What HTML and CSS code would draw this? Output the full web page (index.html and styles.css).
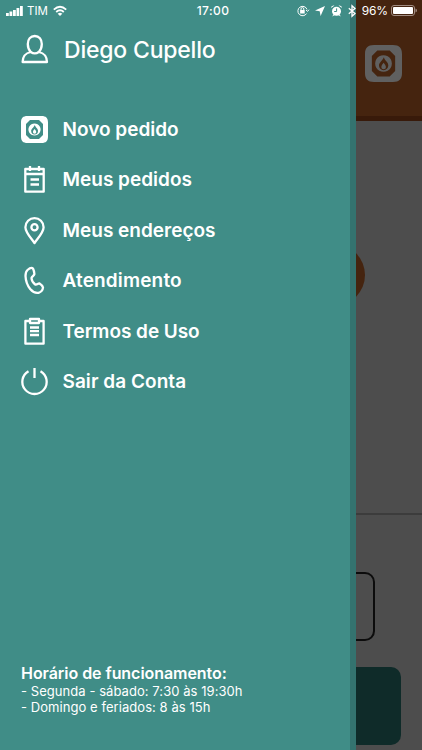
FILE: index.html
```html
<!DOCTYPE html>
<html lang="pt-BR">
<head>
  <meta charset="utf-8">
  <title>Menu</title>
  <link rel="stylesheet" href="styles.css">
</head>
<body>
<div class="screen">

  <!-- page behind the menu -->
  <div class="page">
    <header class="page-header">
      <svg class="page-logo" viewBox="0 0 27 27">
        <path fill-rule="evenodd" d="M6.5 0H20.5C25 0 27 2 27 6.5V20.5C27 25 25 27 20.5 27H6.5C2 27 0 25 0 20.5V6.5C0 2 2 0 6.5 0ZM9 4Q7 6 5 8V19Q7 21 9 23H18Q20 21 22 19V8Q20 6 18 4Z"/>
        <path fill-rule="evenodd" d="M13.5 7.4a6.1 6.1 0 1 0 .01 0ZM13.8 9C14.3 11.5 17 12.3 17 15a3.4 3.4 0 0 1-6.8 0C10.2 13 11.8 12.6 13.8 9Z"/>
        <path d="M13.6 13Q15.3 15 15.3 16a1.7 1.7 0 0 1-3.4 0Q12 14.7 13.6 13Z"/>
      </svg>
    </header>
    <div class="page-map"><div class="page-circle"></div></div>
    <div class="page-form">
      <div class="page-box"></div>
      <div class="page-button"></div>
    </div>
  </div>

  <!-- side menu -->
  <div class="menu">
    <div class="user">
      <svg class="icon" viewBox="0 0 28 30">
        <path d="M14.8 2C10.5 2 7.8 5.4 7.8 10C7.8 13.4 8.8 16 10.8 18C5.4 19.2 2.8 21.6 2.6 28H27C26.8 21.6 24.2 19.2 18.8 18C20.8 16 21.8 13.4 21.8 10C21.8 5.4 19.1 2 14.8 2Z"/>
        <path d="M10.8 18Q14.8 20.8 18.8 18"/>
      </svg>
      <span>Diego Cupello</span>
    </div>

    <ul class="items">
      <li>
        <svg class="icon filled" viewBox="0 0 27 27">
          <path fill-rule="evenodd" d="M6.5 0H20.5C25 0 27 2 27 6.5V20.5C27 25 25 27 20.5 27H6.5C2 27 0 25 0 20.5V6.5C0 2 2 0 6.5 0ZM9 4Q7 6 5 8V19Q7 21 9 23H18Q20 21 22 19V8Q20 6 18 4Z"/>
          <path fill-rule="evenodd" d="M13.5 7.4a6.1 6.1 0 1 0 .01 0ZM13.8 9C14.3 11.5 17 12.3 17 15a3.4 3.4 0 0 1-6.8 0C10.2 13 11.8 12.6 13.8 9Z"/>
          <path d="M13.6 13Q15.3 15 15.3 16a1.7 1.7 0 0 1-3.4 0Q12 14.7 13.6 13Z"/>
        </svg>
        <span class="label">Novo pedido</span>
      </li>
      <li>
        <svg class="icon" viewBox="0 0 27 27">
          <path d="M4.3 3H22.7V25.7H4.3ZM4.3 8H22.7M9 0V5M18 0V5M9.5 13.5H18M9.5 18.5H18"/>
        </svg>
        <span class="label">Meus pedidos</span>
      </li>
      <li>
        <svg class="icon" viewBox="0 0 27 27">
          <path d="M13.5 26C10.5 21.5 4.4 15.5 4.4 10.2A9.1 9.1 0 0 1 22.6 10.2C22.6 15.5 16.5 21.5 13.5 26Z"/>
          <circle cx="13.5" cy="10.2" r="3.1"/>
        </svg>
        <span class="label">Meus endereços</span>
      </li>
      <li>
        <svg class="icon" viewBox="0 0 27 27">
          <path d="M6.5 3C8.6 1.2 11 .6 12 1.6C12.8 3.2 13.2 5 13.4 7C13.2 8.6 10.8 9.4 10.5 11C10.6 13.5 12.2 16 14.2 17.5C15.8 18.3 17 16.2 18.5 16.4C20.3 17.5 21.6 19 22 20.5C21.8 22.7 20 25 17.5 25.8C14.5 26.4 11.5 24.7 9.2 22C6.4 18.5 4.7 13.7 4.5 9C4.5 6.5 5 4.3 6.5 3Z"/>
        </svg>
        <span class="label call">Atendimento</span>
      </li>
      <li>
        <svg class="icon" viewBox="0 0 27 27">
          <path d="M9 3H4.4V25.7H22.6V3H18M9 1H18V5H9ZM9 9.5H18M9 13.2H18M9 17H18"/>
        </svg>
        <span class="label terms">Termos de Uso</span>
      </li>
      <li>
        <svg class="icon" viewBox="0 0 27 27">
          <path d="M7.5 3.2A12.2 12.2 0 1 0 19.5 3.2M13.5 0V10"/>
        </svg>
        <span class="label exit">Sair da Conta</span>
      </li>
    </ul>

    <div class="hours">
      <strong>Horário de funcionamento:</strong>
      <span>- Segunda - sábado: 7:30 às 19:30h</span>
      <span>- Domingo e feriados: 8 às 15h</span>
    </div>
  </div>

  <!-- status bar -->
  <div class="status">
    <div class="status-left">
      <svg width="17" height="10" viewBox="0 0 17 10"><path d="M0 7h2.8v3H0zM3.5 5.5h2.8V10H3.5zM7 4h2.8v6H7zM10.5 2h2.8v8h-2.8zM14 0h2.8v10H14z"/></svg>
      <span class="carrier">TIM</span>
      <svg width="14" height="10" viewBox="0 0 14 10"><path class="line" d="M.8 3.6Q7-2 13.2 3.6M3.2 6Q7 2.6 10.8 6"/><path d="M4.7 7.7Q7 5.8 9.3 7.7L7 10Z"/></svg>
    </div>
    <span class="clock">17:00</span>
    <div class="status-right">
      <svg width="12" height="12" viewBox="0 0 12 12"><path class="line slim" d="M9.6 8.5A4.7 4.7 0 1 1 10 4.4M9 5L10.5 6.4L12 4.7M4 5V4a1.4 1.4 0 0 1 2.8 0v1"/><path d="M3.1 5H7.7V8.5H3.1Z"/></svg>
      <svg width="10" height="10" viewBox="0 0 10 10"><path d="M10 0L5.6 10L4.7 5.3L0 4.4Z"/></svg>
      <svg width="11" height="12" viewBox="0 0 11 12"><circle cx="5.5" cy="6.2" r="4.5"/><path d="M0 3Q0 0 3.5 .6ZM11 3Q11 0 7.5 .6ZM1 11.5L3 9L4 10ZM10 11.5L8 9L7 10Z"/><path class="hand" d="M5.6 3.4V6.5H3.2"/></svg>
      <svg width="8" height="12" viewBox="0 0 8 12"><path class="line bluetooth" d="M.8 3.2L7 8.5L4 11.2V.8L7 3.5L.8 8.8"/></svg>
      <span class="percent">96%</span>
      <svg width="26" height="11" viewBox="0 0 26 11"><rect class="battery" x=".5" y=".5" width="23" height="10" rx="2.5"/><rect x="2" y="2" width="20" height="7" rx="1"/><path class="battery-tip" d="M24.5 3.5Q26 4 26 5.5T24.5 7.5Z"/></svg>
    </div>
  </div>

</div>
</body>
</html>
```

FILE: styles.css
```css
body {
    margin: 0;
    font-family: Inter, "Liberation Sans", sans-serif;
    color: #fff;
}
.screen {
    position: relative;
    width: 422px;
    height: 750px;
    overflow: hidden;
    background: #4d4d4d;
}
svg {
    display: block;
    flex: none;
    overflow: visible;
}

/* page */
.page-header {
    box-sizing: border-box;
    height: 121px;
    padding: 45px 20px 0 0;
    background: #45240f;
    border-bottom: 5px solid #381a0a;
}
.page-logo {
    width: 37px;
    height: 37px;
    margin-left: auto;
    fill: #606060;
}
.page-map {
    box-sizing: border-box;
    height: 394px;
    padding: 123px 57px 0 0;
    border-bottom: 2px solid #3c3c3c;
}
.page-circle {
    width: 62px;
    height: 62px;
    margin-left: auto;
    border-radius: 50%;
    background: #45240f;
}
.page-form {
    padding: 57px 21px 0 21px;
}
.page-box {
    box-sizing: border-box;
    height: 69px;
    margin: 0 26px;
    border: 2px solid #0c0c0c;
    border-radius: 10px;
}
.page-button {
    height: 78px;
    margin-top: 26px;
    border-radius: 10px;
    background: #0f2b29;
}

/* menu */
.menu {
    position: absolute;
    top: 0;
    left: 0;
    box-sizing: border-box;
    display: flex;
    flex-direction: column;
    width: 356px;
    height: 750px;
    padding: 34px 0 35px 20px;
    background: #408d87;
    border-right: 6px solid #34736f;
}
.user {
    display: flex;
    align-items: center;
    gap: 16px;
    height: 30px;
    font-size: 23px;
    font-weight: 550;
    letter-spacing: -0.2px;
}
.user span {
    padding-top: 2px;
}
.user .icon {
    width: 28px;
    height: 30px;
}
.icon {
    width: 27px;
    height: 27px;
    fill: none;
    stroke: #fff;
    stroke-width: 2.3;
    stroke-linejoin: round;
}
.icon.filled {
    fill: #fff;
    stroke: none;
}
.items {
    margin: 40.4px 0 0;
    padding: 0 0 0 0.5px;
    list-style: none;
}
.items li {
    display: flex;
    align-items: center;
    gap: 15px;
    height: 50.4px;
    font-size: 19px;
    font-weight: 600;
}
.label {
    letter-spacing: 0;
}
.label.call {
    letter-spacing: 0.15px;
}
.label.terms {
    letter-spacing: -0.05px;
}
.label.exit {
    letter-spacing: 0.05px;
}
.hours {
    display: flex;
    flex-direction: column;
    margin-top: auto;
    padding-left: 1px;
    font-size: 13px;
    line-height: 16px;
    letter-spacing: 0.06px;
}
.hours strong {
    font-size: 16px;
    font-weight: 600;
    line-height: 20px;
    letter-spacing: -0.05px;
}

/* status bar */
.status {
    position: absolute;
    top: 0;
    left: 0;
    display: grid;
    grid-template-columns: 1fr auto 1fr;
    align-items: center;
    box-sizing: border-box;
    width: 422px;
    height: 21px;
    padding: 0 5px 0 6px;
    font-size: 12px;
    fill: #fff;
}
.status-left, .status-right {
    display: flex;
    align-items: center;
}
.status-left {
    gap: 4px;
}
.status-right {
    justify-content: flex-end;
    gap: 6px;
}
.carrier {
    margin-right: 1px;
    font-size: 11.5px;
}
.clock {
    padding-left: 3px;
    font-weight: 500;
    letter-spacing: 0.4px;
}
.percent {
    margin-right: -3px;
    letter-spacing: -0.1px;
}
.line {
    fill: none;
    stroke: #fff;
    stroke-width: 1.8;
}
.slim {
    stroke-width: 1;
}
.bluetooth {
    stroke-width: 1.3;
}
.hand {
    fill: none;
    stroke: #408d87;
}
.battery {
    fill: none;
    stroke: #a08b80;
}
.battery-tip {
    fill: #a08b80;
}
```
